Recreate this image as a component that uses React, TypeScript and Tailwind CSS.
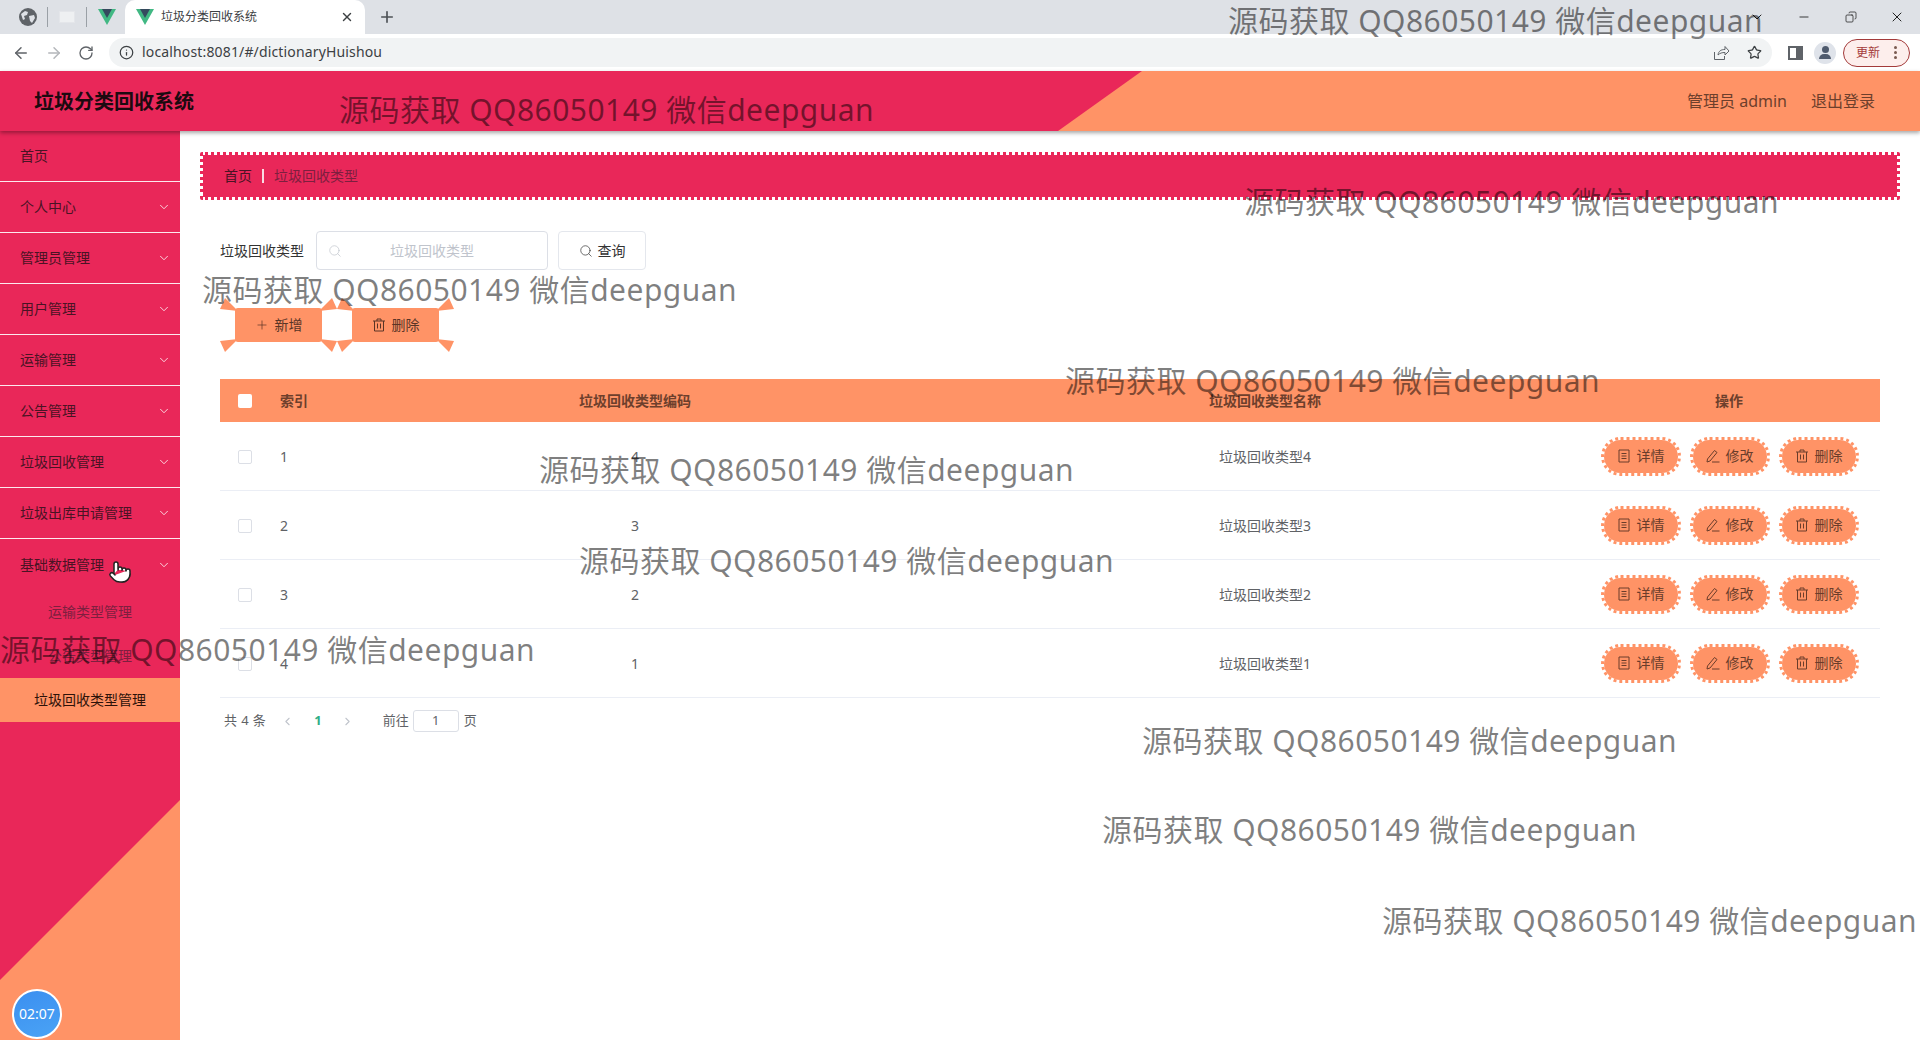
import { ArrowLeft, ArrowRight, ChevronDown, ChevronLeft, ChevronRight, Copy, Info, Minus, Plus, Pointer, RotateCw, Search, Star, X } from "lucide-react";

const menus = ["个人中心", "管理员管理", "用户管理", "运输管理", "公告管理", "垃圾回收管理", "垃圾出库申请管理", "基础数据管理"];

const rows = [
  { idx: 1, code: "4", name: "垃圾回收类型4" },
  { idx: 2, code: "3", name: "垃圾回收类型3" },
  { idx: 3, code: "2", name: "垃圾回收类型2" },
  { idx: 4, code: "1", name: "垃圾回收类型1" },
];

const marks = [
  [1228, 0], [339, 89], [1244, 181], [202, 269], [1065, 360], [539, 449],
  [579, 540], [0, 629], [1142, 720], [1102, 809], [1382, 900],
];

function VueLogo() {
  return (
    <svg width="18" height="16" viewBox="0 0 18 16">
      <path d="M0 0h18L9 16z" fill="#41b883" />
      <path d="M4 0h10L9 9z" fill="#35495e" />
    </svg>
  );
}

function GlobeIcon() {
  return (
    <svg width="18" height="18" viewBox="0 0 18 18">
      <circle cx="9" cy="9" r="9" fill="#5f6368" />
      <path d="M2 6l4-3 3 1-1 3-3 1 1 3-2 1zM10 8l5-1 1 3-3 5-2-2z" fill="#dee1e6" />
    </svg>
  );
}

function ShareIcon() {
  return (
    <svg width="17" height="17" viewBox="0 0 17 17" fill="none" stroke="#5f6368" strokeWidth="1">
      <path d="M1.500 8v7.500h10V12M5 11c.5-4 3-5.500 7-5.500V2.500l4 4.500-4 4V8.500c-3 0-5 .5-7 2.500z" />
    </svg>
  );
}

function TrashIcon({ className }: { className?: string }) {
  return (
    <svg className={className} width="14" height="14" viewBox="0 0 14 14" fill="none" stroke="currentColor" strokeWidth="1">
      <path d="M1 3h12M5 3V1h4v2M2.500 3v10h9V3M5.500 5.500v5M8.500 5.500v5" />
    </svg>
  );
}

function DocIcon() {
  return (
    <svg width="14" height="14" viewBox="0 0 14 14" fill="none" stroke="currentColor" strokeWidth="1">
      <path d="M2 1h10v12H2zM4.500 4.500h5M4.500 7h5M4.500 9.500h5" />
    </svg>
  );
}

function EditIcon() {
  return (
    <svg width="14" height="14" viewBox="0 0 14 14" fill="none" stroke="currentColor" strokeWidth="1">
      <path d="M1.500 10L8.500 1.500l2.500 2L4 12l-3 1zM6 13h7.500" />
    </svg>
  );
}

function Spikes() {
  return (
    <svg className="absolute left-[-16px] top-[-10px]" width="119" height="54" viewBox="-16 -10 119 54" fill="#ff9366">
      <path d="M3 3L-10 -10L-15 1z" />
      <path d="M84 3L97 -10L102 1z" />
      <path d="M3 31L-15 33L-10 44z" />
      <path d="M84 31L102 33L97 44z" />
    </svg>
  );
}

function ToolButton({ label, icon }: { label: string; icon: React.ReactNode }) {
  return (
    <button className="relative flex h-[34px] w-[87px] items-center justify-center gap-[6px] rounded-[3px] bg-[#ff9366] text-sm text-[#5a3526]">
      <Spikes />
      {icon}
      {label}
    </button>
  );
}

function RowButton({ label, icon }: { label: string; icon: React.ReactNode }) {
  return (
    <button className="flex h-[39px] w-[80px] items-center justify-center gap-[6px] rounded-[20px] border-[3px] border-dotted border-[#ff9366] bg-[#ff9366] bg-clip-padding text-sm text-[#6a3d2b]">
      {icon}
      {label}
    </button>
  );
}

export default function App() {
  return (
    <div className="relative flex h-[1040px] w-[1920px] flex-col overflow-hidden bg-white font-['Noto_Sans','Noto_Sans_CJK_SC',sans-serif] text-[#333]">
      {/* browser tabs */}
      <div className="flex h-[34px] items-center bg-[#dee1e6] text-[#4d5156]">
        <div className="flex w-[125px] items-center">
          <span className="ml-[19px]"><GlobeIcon /></span>
          <span className="ml-[10px] h-[20px] w-px bg-[#9aa0a6]" />
          <span className="ml-[11px] h-[12px] w-[16px] border border-[#e4e6ea] bg-[#eef0f2]" />
          <span className="ml-[11px] h-[20px] w-px bg-[#9aa0a6]" />
          <span className="ml-[11px]"><VueLogo /></span>
        </div>
        <div className="flex h-full w-[240px] items-center rounded-t-[10px] bg-white pl-[11px] text-xs text-[#3c4043]">
          <VueLogo />
          <span className="ml-[7px] w-[168px]">垃圾分类回收系统</span>
          <X size={14} strokeWidth={2.5} className="ml-[11px]" />
        </div>
        <Plus size={18} strokeWidth={2.2} className="ml-[13px]" />
        <div className="ml-auto flex items-center text-[#222]">
          <ChevronDown size={16} strokeWidth={1.5} />
          <Minus size={14} strokeWidth={1.5} className="ml-[32px]" />
          <Copy size={12} strokeWidth={1.5} className="ml-[34px] -scale-x-100" />
          <X size={16} strokeWidth={1.5} className="ml-[32px] mr-[15px]" />
        </div>
      </div>

      {/* browser toolbar */}
      <div className="flex h-[37px] items-center bg-white text-[#5f6368]">
        <ArrowLeft size={18} className="ml-[12px]" />
        <ArrowRight size={18} className="ml-[15px] text-[#b4b7bb]" />
        <RotateCw size={16} className="ml-[15px]" />
        <div className="ml-[15px] flex h-[29px] w-[1663px] items-center rounded-full bg-[#f1f3f4] pb-[1px] text-sm tracking-[0.15px] text-[#3c4043]">
          <Info size={15} className="ml-[10px]" />
          <span className="ml-[8px]">localhost:8081/#/dictionaryHuishou</span>
          <span className="ml-auto"><ShareIcon /></span>
          <Star size={15} className="ml-[17px] mr-[10px]" />
        </div>
        <span className="ml-[16px] flex h-[14px] w-[15px] justify-end border-2 border-[#5f6368]">
          <span className="h-full w-[5px] bg-[#5f6368]" />
        </span>
        <span className="ml-[11px] flex h-[22px] w-[22px] flex-col items-center justify-center rounded-full bg-[#dfe3ea]">
          <span className="h-[7px] w-[7px] rounded-full bg-[#4f5b6e]" />
          <span className="mt-[1px] h-[5px] w-[12px] rounded-t-[5px] bg-[#4f5b6e]" />
        </span>
        <div className="ml-[7px] flex h-[28px] w-[67px] items-center rounded-full border border-[#a33a3a] bg-[#fdeeec] pl-[12px] text-xs text-[#a33a3a]">
          更新
          <span className="ml-[14px] flex flex-col gap-[2px]">
            <span className="h-[3px] w-[3px] rounded-full bg-[#7a5a50]" />
            <span className="h-[3px] w-[3px] rounded-full bg-[#7a5a50]" />
            <span className="h-[3px] w-[3px] rounded-full bg-[#7a5a50]" />
          </span>
        </div>
      </div>

      {/* app header */}
      <header className="relative z-10 flex h-[60px] items-center bg-[#ff9366] shadow-[0_2px_4px_rgba(0,0,0,0.35)]">
        <div className="flex h-full w-[1142px] items-center bg-[#e92759] pl-[34px] pt-[2px] text-xl font-bold text-[#1c0a10] [clip-path:polygon(0_0,100%_0,1058px_100%,0_100%)]">
          垃圾分类回收系统
        </div>
        <div className="ml-auto flex items-center gap-[24px] pr-[45px] text-base text-[#6d3f2c]">
          <span>管理员 admin</span>
          <span>退出登录</span>
        </div>
      </header>

      <div className="flex min-h-0 flex-1">
        {/* sidebar */}
        <aside className="relative w-[180px] shrink-0 bg-[#e92759] text-sm text-[#4a1324]">
          <svg className="absolute bottom-0 left-0" width="180" height="240" viewBox="0 0 180 240">
            <path d="M180 0V240H0V180z" fill="#ff9366" />
          </svg>
          <div className="relative">
            <div className="flex h-[51px] items-center border-b border-white/90 pl-[20px]">首页</div>
            {menus.map((m, i) => (
              <div key={m} className={`flex h-[51px] items-center justify-between pl-[20px] pr-[9px] ${i < 7 ? "border-b border-white/90" : ""}`}>
                {m}
                <ChevronDown size={14} strokeWidth={1.5} className="text-white/90" />
              </div>
            ))}
            <div className="flex h-[44px] items-center justify-center text-[#7d1f3f]">运输类型管理</div>
            <div className="flex h-[44px] items-center justify-center text-[#7d1f3f]">公告类型管理</div>
            <div className="flex h-[44px] items-center justify-center bg-[#ff9366] text-[#2d1209]">垃圾回收类型管理</div>
          </div>
          <Pointer size={24} fill="#fff" strokeWidth={1.5} className="absolute left-[108px] top-[429px] text-[#222]" />
          <div className="absolute bottom-[1px] left-[12px] flex h-[50px] w-[50px] items-center justify-center rounded-full border-2 border-white bg-[linear-gradient(160deg,#3b8ff0,#4aa3f5)] text-sm text-white">
            02:07
          </div>
        </aside>

        {/* main */}
        <main className="min-w-0 flex-1 px-[20px] pt-[21px]">
          <div className="flex h-[48px] items-center rounded-[2px] border-[3px] border-dotted border-[#e92759] bg-[#e92759] bg-clip-padding pl-[21px] text-sm">
            <span className="text-[#4a1324]">首页</span>
            <span className="mx-[10px] h-[14px] w-[2px] bg-[#f9dbe3]" />
            <span className="text-[#7d1f3f]">垃圾回收类型</span>
          </div>

          <div className="mt-[31px] flex h-[39px] items-center pl-[20px]">
            <span className="text-sm text-[#333]">垃圾回收类型</span>
            <div className="relative ml-[12px] flex h-full w-[232px] items-center justify-center rounded-[4px] border border-[#dcdfe6] text-sm text-[#c0c4cc]">
              <Search size={14} strokeWidth={1.2} className="absolute left-[11px]" />
              垃圾回收类型
            </div>
            <button className="ml-[10px] flex h-full w-[88px] items-center justify-center gap-[5px] rounded-[4px] border border-[#e4e7ed] text-sm text-[#333]">
              <Search size={14} strokeWidth={1.2} />
              查询
            </button>
          </div>

          <div className="ml-[35px] mt-[38px] flex gap-[30px]">
            <ToolButton label="新增" icon={<Plus size={14} strokeWidth={1.2} />} />
            <ToolButton label="删除" icon={<TrashIcon />} />
          </div>

          {/* table */}
          <div className="ml-[20px] mt-[37px] w-[1660px] text-sm">
            <div className="grid h-[43px] grid-cols-[50px_48px_634px_626px_302px] items-center bg-[#ff9366] font-bold text-[#6d3f2c]">
              <span className="ml-[18px] h-[14px] w-[14px] rounded-[2px] bg-white" />
              <span className="pl-[10px]">索引</span>
              <span className="text-center">垃圾回收类型编码</span>
              <span className="text-center">垃圾回收类型名称</span>
              <span className="text-center">操作</span>
            </div>
            {rows.map((r) => (
              <div key={r.idx} className="grid h-[69px] grid-cols-[50px_48px_634px_626px_302px] items-center border-b border-[#ebeef5] text-[#606266]">
                <span className="ml-[18px] mt-[2px] h-[14px] w-[14px] rounded-[2px] border border-[#dcdfe6] bg-white" />
                <span className="pl-[10px] pt-[2px]">{r.idx}</span>
                <span className="pt-[2px] text-center">{r.code}</span>
                <span className="pt-[2px] text-center">{r.name}</span>
                <div className="flex justify-center gap-[9px] pl-[1px]">
                  <RowButton label="详情" icon={<DocIcon />} />
                  <RowButton label="修改" icon={<EditIcon />} />
                  <RowButton label="删除" icon={<TrashIcon />} />
                </div>
              </div>
            ))}
          </div>

          {/* pagination */}
          <div className="ml-[24px] mt-[12px] flex h-[22px] items-center text-[13px] text-[#606266]">
            <span className="tracking-[0.4px]">共 4 条</span>
            <ChevronLeft size={13} className="ml-[15px] text-[#c0c4cc]" />
            <span className="ml-[20px] font-bold text-[#2fae86]">1</span>
            <ChevronRight size={13} className="ml-[19px] text-[#c0c4cc]" />
            <span className="ml-[29px]">前往</span>
            <span className="ml-[4px] flex h-[22px] w-[46px] items-center justify-center rounded-[3px] border border-[#dcdfe6]">1</span>
            <span className="ml-[5px]">页</span>
          </div>
        </main>
      </div>

      {/* watermarks */}
      {marks.map(([left, top], i) => (
        <div
          key={i}
          className="pointer-events-none absolute z-20 whitespace-nowrap text-[30px] leading-[42px] tracking-[0.47px] text-black/50"
          style={{ left, top }}
        >
          源码获取 QQ86050149 微信deepguan
        </div>
      ))}
    </div>
  );
}
